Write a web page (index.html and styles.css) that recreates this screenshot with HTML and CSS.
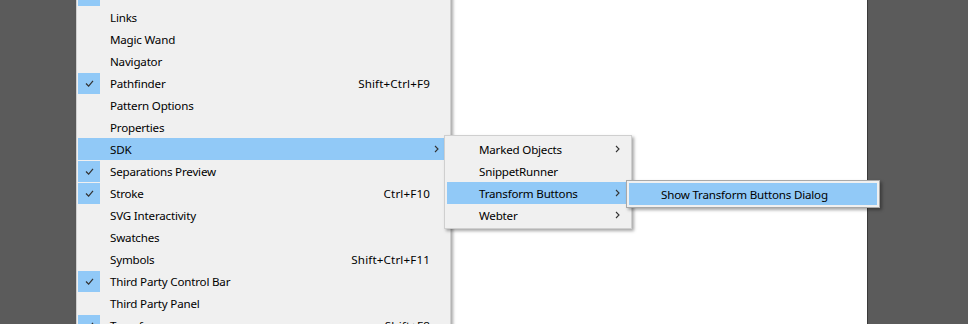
FILE: index.html
```html
<!DOCTYPE html>
<html lang="en">
<head>
  <meta charset="UTF-8">
  <title>Window Menu</title>
  <link rel="stylesheet" href="styles.css">
</head>
<body>
  <div class="workspace">
    <div class="artboard"></div>
  </div>

  <!-- Window menu -->
  <div class="menu main-menu">
    <div class="item"><span class="check"></span><span class="label">Layers</span><span class="key">F7</span></div>
    <div class="item"><span class="check on"><svg viewBox="0 0 10 8"><polyline points="1,4 4,7 9,1"/></svg></span><span class="label">Libraries</span></div>
    <div class="item"><span class="check"></span><span class="label">Links</span></div>
    <div class="item"><span class="check"></span><span class="label">Magic Wand</span></div>
    <div class="item"><span class="check"></span><span class="label">Navigator</span></div>
    <div class="item"><span class="check on"><svg viewBox="0 0 10 8"><polyline points="1,4 4,7 9,1"/></svg></span><span class="label">Pathfinder</span><span class="key">Shift+Ctrl+F9</span></div>
    <div class="item"><span class="check"></span><span class="label">Pattern Options</span></div>
    <div class="item"><span class="check"></span><span class="label">Properties</span></div>
    <div class="item active"><span class="check"></span><span class="label">SDK</span><svg class="arrow" viewBox="0 0 5 8"><polyline points="1,1 4,4 1,7"/></svg></div>
    <div class="item"><span class="check on"><svg viewBox="0 0 10 8"><polyline points="1,4 4,7 9,1"/></svg></span><span class="label">Separations Preview</span></div>
    <div class="item"><span class="check on"><svg viewBox="0 0 10 8"><polyline points="1,4 4,7 9,1"/></svg></span><span class="label">Stroke</span><span class="key">Ctrl+F10</span></div>
    <div class="item"><span class="check"></span><span class="label">SVG Interactivity</span></div>
    <div class="item"><span class="check"></span><span class="label">Swatches</span></div>
    <div class="item"><span class="check"></span><span class="label">Symbols</span><span class="key">Shift+Ctrl+F11</span></div>
    <div class="item"><span class="check on"><svg viewBox="0 0 10 8"><polyline points="1,4 4,7 9,1"/></svg></span><span class="label">Third Party Control Bar</span></div>
    <div class="item"><span class="check"></span><span class="label">Third Party Panel</span></div>
    <div class="item"><span class="check on"><svg viewBox="0 0 10 8"><polyline points="1,4 4,7 9,1"/></svg></span><span class="label">Transform</span><span class="key">Shift+F8</span></div>
    <div class="item"><span class="check"></span><span class="label">Transparency</span><span class="key">Shift+Ctrl+F10</span></div>
  </div>

  <!-- SDK submenu -->
  <div class="menu sdk-menu">
    <div class="item"><span class="check"></span><span class="label">Marked Objects</span><svg class="arrow" viewBox="0 0 5 8"><polyline points="1,1 4,4 1,7"/></svg></div>
    <div class="item"><span class="check"></span><span class="label">SnippetRunner</span></div>
    <div class="item active"><span class="check"></span><span class="label">Transform Buttons</span><svg class="arrow" viewBox="0 0 5 8"><polyline points="1,1 4,4 1,7"/></svg></div>
    <div class="item"><span class="check"></span><span class="label">Webter</span><svg class="arrow" viewBox="0 0 5 8"><polyline points="1,1 4,4 1,7"/></svg></div>
  </div>

  <!-- Transform Buttons submenu -->
  <div class="menu transform-menu">
    <div class="item active"><span class="check"></span><span class="label">Show Transform Buttons Dialog</span></div>
  </div>
</body>
</html>
```

FILE: styles.css
```css
body {
  margin: 0;
  background-color: #5b5b5b;
  font-family: "Noto Sans", "Open Sans", sans-serif;
  font-size: 11.6px;
  letter-spacing: -0.2px;
  color: #000;
  overflow: hidden;
}
.workspace {
  display: flex;
  height: 324px;
}
.artboard {
  margin-left: 300px;
  width: 567px;
  background-color: #fff;
  border-right: 1px solid #3a3a3a;
}
/* Menus */
.menu {
  position: absolute;
  background-color: #f0f0f0;
  border: 1px solid #cfcfcf;
  padding: 2px 2px 2px 1px;
  box-shadow: 2px 2px 3px rgba(0, 0, 0, 0.35);
}
.main-menu {
  left: 76px;
  top: -41px;
  width: 370px;
}
.sdk-menu {
  left: 444px;
  top: 135px;
  width: 182px;
  padding-left: 2px;
}
.transform-menu {
  left: 626px;
  top: 180px;
  width: 248px;
  padding-left: 2px;
  border-color: #a8a8a8;
}
.item {
  display: flex;
  align-items: center;
  height: 22px;
  white-space: nowrap;
}
.item.active {
  background-color: #91c9f7;
}
.check {
  width: 22px;
  height: 21px;
  margin-right: 10px;
  display: flex;
  align-items: center;
  justify-content: center;
}
.check.on {
  background-color: #91c9f7;
}
.check svg {
  width: 9px;
  height: 7px;
  fill: none;
  stroke: #333;
  stroke-width: 1.4;
}
.label {
  flex: 1;
}
.key {
  margin-right: 18px;
  letter-spacing: 0.15px;
}
.arrow {
  width: 5px;
  height: 8px;
  margin-right: 9px;
  fill: none;
  stroke: #333;
  stroke-width: 1.1;
}
```
